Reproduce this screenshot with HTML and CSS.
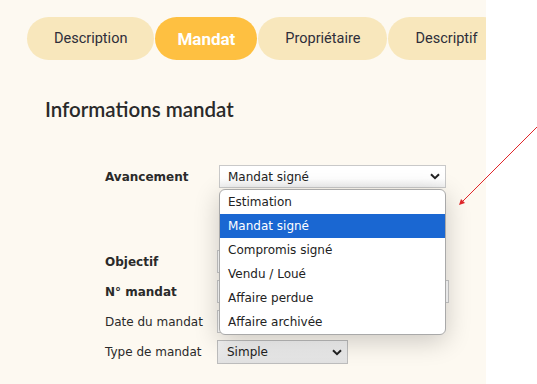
FILE: index.html
```html
<!DOCTYPE html>
<html lang="fr">
<head>
  <meta charset="UTF-8">
  <meta name="viewport" content="width=device-width, initial-scale=1.0">
  <title>Informations mandat</title>
  <link rel="stylesheet" href="styles.css">
</head>
<body>
  <div class="page">
    <nav class="tabs">
      <div class="tab">Description</div>
      <div class="tab active">Mandat</div>
      <div class="tab">Propriétaire</div>
      <div class="tab">Descriptif</div>
    </nav>

    <h2 class="title">Informations mandat</h2>

    <div class="form">
      <div class="row row-status">
        <label class="label strong">Avancement</label>
        <div class="field">
          <div class="select select-status">
            <span>Mandat signé</span>
            <svg class="chevron" width="10" height="7" viewBox="0 0 10 7"><path d="M1 1.2 L5 5.2 L9 1.2" fill="none" stroke="#222" stroke-width="2"/></svg>
          </div>
          <!-- liste ouverte -->
          <ul class="options">
            <li>Estimation</li>
            <li class="selected">Mandat signé</li>
            <li>Compromis signé</li>
            <li>Vendu / Loué</li>
            <li>Affaire perdue</li>
            <li>Affaire archivée</li>
          </ul>
        </div>
      </div>

      <div class="row">
        <label class="label strong">Objectif</label>
        <div class="input input-wide"></div>
      </div>
      <div class="row">
        <label class="label strong">N° mandat</label>
        <div class="input input-wider"></div>
      </div>
      <div class="row">
        <label class="label">Date du mandat</label>
        <div class="input input-date"></div>
      </div>
      <div class="row">
        <label class="label">Type de mandat</label>
        <div class="select select-type">
          <span>Simple</span>
          <svg class="chevron" width="10" height="7" viewBox="0 0 10 7"><path d="M1 1.2 L5 5.2 L9 1.2" fill="none" stroke="#222" stroke-width="2"/></svg>
        </div>
      </div>
    </div>
  </div>

  <svg class="arrow" width="537" height="384" viewBox="0 0 537 384">
    <line x1="537" y1="127" x2="462" y2="202" stroke="#e0262a" stroke-width="1"/>
    <path d="M459 205 L461 199 L465 203 Z" fill="#e0262a"/>
  </svg>
</body>
</html>
```

FILE: styles.css
```css
body {
  margin: 0;
  background-color: #ffffff;
  position: relative;
  width: 537px;
  height: 384px;
  overflow: hidden;
}

.page {
  width: 486px;
  height: 384px;
  background-color: #fdf9f1;
  overflow: hidden;
}

.tabs {
  display: flex;
  gap: 1px;
  padding: 17px 0 0 27px;
  white-space: nowrap;
}

.tab {
  flex: none;
  height: 43px;
  padding: 0 27px;
  display: flex;
  align-items: center;
  border-radius: 22px;
  background-color: #f8e7bc;
  color: #2e2e3a;
  font-family: Roboto, sans-serif;
  font-size: 14.5px;
}

.tab.active {
  padding: 0 22px;
  background-color: #fec041;
  color: #ffffff;
  font-weight: 700;
  font-size: 17px;
}

.title {
  margin: 37px 0 0;
  padding-left: 45px;
  font-family: Lato, sans-serif;
  font-size: 20.5px;
  line-height: 24px;
  font-weight: 600;
  color: #2a2a2a;
}

.form {
  margin: 44px 0 0 105px;
  display: flex;
  flex-direction: column;
  gap: 7px;
  font-family: "DejaVu Sans", sans-serif;
  font-size: 12px;
  color: #222;
}

.row {
  display: grid;
  grid-template-columns: 112px auto;
  align-items: center;
  justify-items: start;
}

.row-status {
  margin-bottom: 55px;
}

.label {
  color: #2a2a2a;
}

.label.strong {
  font-weight: 700;
}

.field {
  position: relative;
  margin-left: 2px;
}

.select {
  box-sizing: border-box;
  display: flex;
  align-items: center;
  justify-content: space-between;
  border: 1px solid #c9c9c9;
  padding: 0 5px 0 8px;
}

.select-status {
  width: 227px;
  height: 23px;
  background: linear-gradient(#ffffff 60%, #f1f1f1);
}

.select-type {
  width: 131px;
  height: 24px;
  padding-left: 9px;
  border-color: #bdbdbd;
  background: linear-gradient(#f4f4f4, #e2e2e2);
}

.chevron {
  display: block;
}

.input {
  box-sizing: border-box;
  height: 23px;
  border: 1px solid #c9c9c9;
  background-color: #ffffff;
}

.input-wide { width: 229px; }
.input-wider { width: 232px; }
.input-date { width: 160px; }

.options {
  position: absolute;
  top: 24px;
  left: 0;
  width: 227px;
  box-sizing: border-box;
  margin: 0;
  padding: 0;
  list-style: none;
  background-color: #ffffff;
  border: 1px solid #a9a9a9;
  border-radius: 6px;
  overflow: hidden;
  box-shadow: 0 6px 26px rgba(0, 0, 0, 0.2);
  z-index: 2;
}

.options li {
  height: 24px;
  line-height: 24px;
  padding-left: 8px;
  color: #222;
}

.options li.selected {
  background-color: #1a67d2;
  color: #ffffff;
}

.arrow {
  position: absolute;
  top: 0;
  left: 0;
  pointer-events: none;
}
```
